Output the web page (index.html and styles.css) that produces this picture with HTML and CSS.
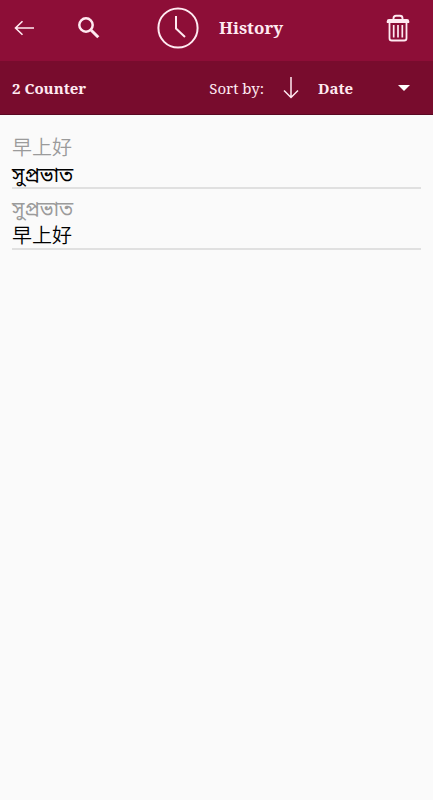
FILE: index.html
```html
<!DOCTYPE html>
<html lang="en">
<head>
<meta charset="utf-8">
<meta name="viewport" content="width=device-width, initial-scale=1">
<title>History</title>
<link rel="stylesheet" href="styles.css">
</head>
<body>
<header class="topbar">
  <button class="icon-button" type="button" aria-label="Back">
    <svg width="24" height="24" viewBox="0 0 24 24" fill="none" stroke="currentColor" stroke-width="1.6"><path d="M22 12H3.5M10.5 5.2L3.5 12l7 6.8"/></svg>
  </button>
  <button class="icon-button search" type="button" aria-label="Search">
    <svg width="24" height="24" viewBox="0 0 24 24" fill="none" stroke="currentColor"><circle cx="9" cy="9" r="6.7" stroke-width="2.5"/><path d="M14.2 14.2L21.3 21.3" stroke-width="3"/></svg>
  </button>
  <div class="heading">
    <svg width="42" height="42" viewBox="0 0 42 42" fill="none" stroke="currentColor" stroke-width="2"><circle cx="21" cy="21" r="19.6"/><path d="M19 9v12.5l9 8.5"/></svg>
    <h1 class="title">History</h1>
  </div>
  <button class="icon-button" type="button" aria-label="Delete all">
    <svg width="24" height="28" viewBox="0 0 24 28" fill="none" stroke="currentColor"><path d="M7.5 5.5V4.2Q7.5 1.7 10 1.7h4q2.5 0 2.5 2.5V5.5" stroke-width="1.9"/><path d="M.8 9V7.2Q.8 5 3 5h18q2.2 0 2.2 2.2V9z" fill="currentColor" stroke="none"/><path d="M3.5 9v15.2q0 2.3 2.3 2.3h12.4q2.3 0 2.3-2.3V9" stroke-width="1.8"/><path d="M7.7 11v12.5M12 11v12.5M16.3 11v12.5" stroke-width="1.7"/></svg>
  </button>
</header>
<section class="sortbar">
  <span class="count">2 Counter</span>
  <label class="sort-label" for="sort">Sort by:</label>
  <button class="icon-button direction" type="button" aria-label="Descending order">
    <svg width="16" height="22" viewBox="0 0 16 22" fill="none" stroke="currentColor" stroke-width="1.5"><path d="M8 0v20.5M1 13.5l7 7 7-7"/></svg>
  </button>
  <div class="sort-field">
    <select class="sort-select" id="sort"><option>Date</option></select>
    <svg class="caret" width="12" height="6" viewBox="0 0 12 6" fill="currentColor"><path d="M0 0h12L6 6z"/></svg>
  </div>
</section>
<main>
  <ul class="entries">
    <li class="entry"><p class="source" lang="zh">早上好</p><p class="result" lang="bn">সুপ্রভাত</p></li>
    <li class="entry"><p class="source" lang="bn">সুপ্রভাত</p><p class="result" lang="zh">早上好</p></li>
  </ul>
</main>
</body>
</html>
```
FILE: styles.css
```css
* { box-sizing: border-box; }
body {
  margin: 0;
  min-height: 100vh;
  background: #fafafa;
  color: #000;
  font-family: "Noto Serif", "Droid Serif", "Liberation Serif", serif;
}
svg { display: block; flex: none; }
button, select {
  padding: 0;
  border: 0;
  background: none;
  color: inherit;
  font: inherit;
}
.topbar, .sortbar {
  display: flex;
  align-items: center;
  color: #ffeaf1;
}
.topbar {
  height: 61px;
  padding: 0 23px 5px 12px;
  background: #8d0e37;
}
.icon-button { flex: none; }
.search { margin-left: 41px; }
.heading {
  display: flex;
  flex: 1;
  align-items: center;
  gap: 20px;
  margin-left: 56px;
}
.title {
  margin: 0;
  font-size: 17px;
  line-height: 24px;
}
.sortbar {
  height: 54px;
  padding: 1px 23px 0 12px;
  border-bottom: 1px solid #5a0822;
  background: #780c2d;
  font-size: 15px;
  line-height: 24px;
}
.count {
  flex: 1;
  font-weight: bold;
}
.direction { margin: 0 19px; }
.sort-field {
  display: flex;
  align-items: center;
  position: relative;
  width: 92px;
}
.sort-select {
  width: 100%;
  appearance: none;
  color: #ffeaf1;
  font-weight: bold;
}
.caret {
  position: absolute;
  right: 0;
  color: #fff;
  pointer-events: none;
}
.entries {
  margin: 0;
  padding: 18px 12px 0;
  list-style: none;
}
.entry { border-bottom: 2px solid #e0e0e0; }
.entry + .entry { padding-top: 5px; }
.source, .result {
  margin: 0;
  font-family: "Noto Sans CJK SC", "Noto Sans Bengali", sans-serif;
  font-size: 20px;
  font-weight: 350;
  line-height: 27px;
}
.source:lang(bn), .result:lang(bn) { font-weight: 400; }
.source { color: #9b9b9b; }
```
